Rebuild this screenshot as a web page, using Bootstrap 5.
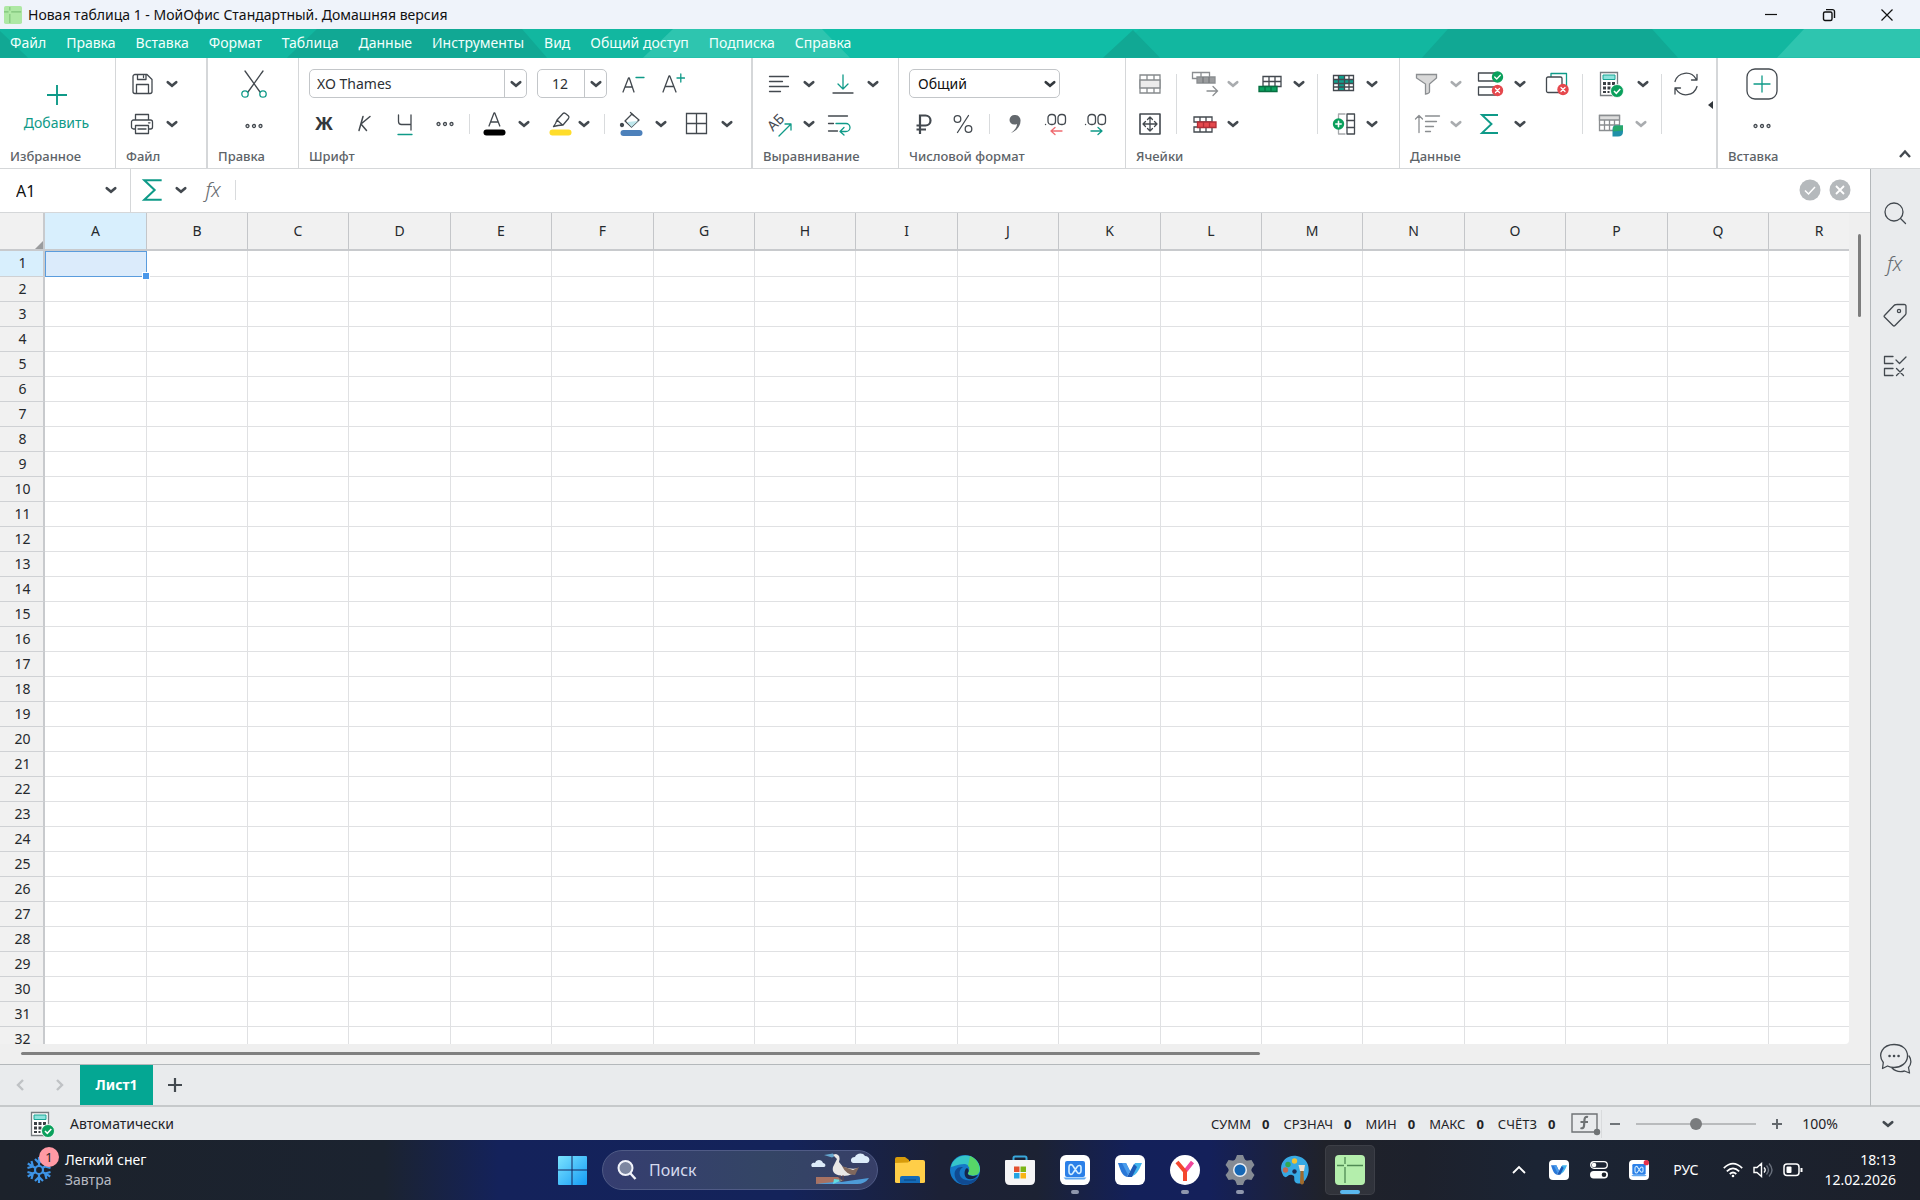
<!DOCTYPE html>
<html lang="ru">
<head>
<meta charset="utf-8">
<meta name="viewport" content="width=device-width, initial-scale=1">
<title>Новая таблица 1 - МойОфис Стандартный. Домашняя версия</title>
<link href="https://cdn.jsdelivr.net/npm/bootstrap@5.3.0/dist/css/bootstrap.min.css" rel="stylesheet">
<style>
:root{--ink:#43494f;--teal:#0f9a88;--line:#d5d7d9;--panel:#e9ebed}
body{font-family:"Noto Sans","Open Sans",sans-serif;font-size:14px;line-height:20px;color:#1f2327;height:100vh;background:#fff;overflow:hidden}
button{background:none;border:0;padding:0;color:var(--ink);font:inherit}
svg{display:block;flex:none}
.ln{fill:none;stroke:var(--ink);stroke-width:1.3;stroke-linecap:round;stroke-linejoin:round}
.tl{stroke:var(--teal)}
.off{opacity:.45}
.titlebar{height:29px;background:#eff3fa;font-size:14px;color:#111}
.titlebar .ctl{width:58px;height:29px;color:#111}
.menubar{height:29px;background:#12b7a0}
.menubar svg{position:absolute;inset:0;width:100%;height:100%}
.menubar nav{position:relative;gap:20px;padding-left:10px}
.menubar a{color:#f2fffc;text-decoration:none;font-size:14px;line-height:28px;white-space:nowrap}
.ribbon{height:112px;border-bottom:1px solid var(--line)}
.grp{border-right:1px solid var(--line);padding:6px 0 0 10px;position:relative}
.grp.last{border:0;flex:1}
.grp .body{height:82px}
.grp h2{font-size:13px;line-height:20px;font-weight:500;color:#5d6368;margin:0;white-space:nowrap}
.w-fav{width:116px}.w-file{width:92px}.w-edit{width:91px}.w-font{width:454px}.w-align{width:146px}.w-num{width:227px}.w-cells{width:274px}.w-data{width:318px}
.trow{height:40px;display:flex;align-items:center}
.tool{width:24px;height:28px;display:flex;align-items:center;justify-content:center;flex:none}
.tool.wide{width:28px}
.chev{width:16px;height:24px;display:flex;align-items:center;justify-content:center;flex:none}
.vr1{width:1px;height:20px;background:#d9dbdd;flex:none}
.vr1.tall{height:60px;margin-top:10px}
.m6{margin-left:6px}.m10{margin-left:10px}.m12{margin-left:12px}.m14{margin-left:14px}
.combo{height:29px;border:1px solid #c3c6c9;border-radius:5px;display:flex;align-items:center;background:#fff;overflow:hidden}
.combo input{border:0;outline:0;min-width:0;flex:1;height:27px;padding:0 7px;font-size:14px;color:#2b3034;background:none}
.combo button{width:22px;height:27px;border-left:1px solid #c3c6c9;display:flex;align-items:center;justify-content:center}
.fnt{width:218px}.siz{width:70px}
.siz input{padding:0 0 0 14px}
.numsel{position:relative;width:151px}
.numsel select{appearance:none;width:100%;height:29px;border:1px solid #c3c6c9;border-radius:5px;padding:0 8px;font-size:14px;color:#111;background:#fff}
.numsel svg{position:absolute;right:2px;top:7px;pointer-events:none}
.gl{font-size:20px;line-height:24px;color:#666b70;font-weight:300}
.fbar{height:44px;border-bottom:1px solid var(--line)}
.namebox{width:131px;border-right:1px solid var(--line);padding-left:16px}
.namebox input,.fxin{border:0;outline:0;font-size:16px;min-width:0;background:none}
.namebox input{width:87px;padding:2px 0 0;color:#111}
.sheet{flex:1 1 0;overflow:hidden;position:relative;border-radius:0 0 4px 0;background:#fff}
.cells{table-layout:fixed;border-collapse:separate;border-spacing:0;width:1px}
.cells th{font-weight:400;text-align:center;background:#f1f1f1;padding:0;color:#25292d;overflow:hidden}
.cells thead th{height:38px;border-right:1px solid #c4c6c9;border-bottom:2px solid #c8cacd;font-size:14px}
.cells tbody th{height:25px;border-bottom:1px solid #cfd1d4;border-right:2px solid #c8cacd;font-size:14px;line-height:24px;padding-left:2px}
.cells tbody tr:first-child th{height:26px}
.cells thead th:first-child{border-right:2px solid #c8cacd;position:relative}
.cells thead th:first-child::after{content:"";position:absolute;right:0;bottom:0;border:4px solid;border-color:transparent #9a9c9e #9a9c9e transparent}
.cells td{padding:0;border-right:1px solid #e0e1e3;border-bottom:1px solid #e0e1e3}
.cells .hot{background:#d8effd}
.cells td.sel{background:#dbebfb;border:1px solid #5a9cdd;position:relative}
.cells td.sel::after{content:"";position:absolute;right:-4px;bottom:-4px;width:8px;height:8px;background:#4a98ea;border:1px solid #fff;z-index:2}
.c-head{width:45px}.c-col{width:101px}.c-col.plus{width:102px}
.vscroll{width:21px;background:#efefef;padding:21px 0 0 9px}
.vscroll i{display:block;width:3px;height:83px;background:#7d7d7d;border-radius:2px}
.hscroll{height:21px;background:#efefef;border-bottom:1px solid #b4b8bb;padding:8px 0 0 21px}
.hscroll i{display:block;width:67%;height:3px;background:#808080;border-radius:2px}
.tabs{height:42px;background:var(--panel);border-bottom:2px solid #c6c9cb}
.tabs .arr{width:40px;color:#b9bcbf}
.tabs .cur{width:73px;height:40px;background:#04a793;color:#fff;font-weight:700;font-size:14px}
.side{width:51px;background:var(--panel);border-left:1px solid #b4b8bb;border-bottom:2px solid #c6c9cb;padding:27px 0 6px}
.side .sb{width:48px;height:34px;margin-bottom:17px;display:flex;align-items:center;justify-content:center}
.status{height:33px;background:var(--panel);font-size:14px}
.status .sums{font-size:13px;gap:14px}
.status .sums b{margin-left:11px}
.zoomr{appearance:none;width:120px;height:14px;background:linear-gradient(#b9bbbd,#b9bbbd) center/100% 2px no-repeat;margin:0}
.zoomr::-webkit-slider-thumb{appearance:none;width:12px;height:12px;border-radius:50%;background:#7a7c7e}
.zoomlist{margin:0 24px 0 42px}
.task{height:60px;color:#fff;font-size:14px;line-height:20px;background:linear-gradient(90deg,#1c222b 0,#1b2330 20%,#14225b 26%,#14235a 41%,#1c2136 49%,#1c2233 54%,#13205a 59%,#14205a 63%,#20222a 69%,#1d212c 74%,#1b2434 80%,#1c202a 100%)}
.task .edge{flex:1 1 0}
.task .pinned{padding-left:30px}
.task button{color:#fff}
.tk{width:55px;height:60px;position:relative;display:flex;align-items:center;justify-content:center}
.tk.run::after{content:"";position:absolute;bottom:6px;left:24px;width:8px;height:4px;border-radius:2px;background:#8f97ad}
.tk.act::before{content:"";position:absolute;left:3px;top:5px;width:50px;height:50px;border-radius:5px;background:#ffffff14;border:1px solid #ffffff10}
.tk.act::after{left:18px;width:20px;background:#5bb8ee}
.tk svg{position:relative}
.start{width:45px}
.find{width:276px;height:40px;border:1px solid #505b86;border-radius:20px;background:linear-gradient(90deg,#353d70,#344565 60%,#373f68);padding-left:14px;margin:0 4px 0 8px}
.find input{flex:1;min-width:0;border:0;outline:0;background:none;color:#dbe0f2;font-size:16px;padding:0 0 0 12px}
.find input::placeholder{color:#d5daee;opacity:1}
.tray{width:40px;height:60px;display:flex;align-items:center;justify-content:center}
.tray.slim{width:30px}
.flake{position:relative;margin-left:25px;width:40px}
.flake b{position:absolute;left:14px;top:-9px;width:20px;height:20px;border-radius:50%;background:#ff99a4;color:#222;font-weight:400;font-size:13px;text-align:center}
</style>
</head>
<body class="d-flex flex-column">
<svg width="0" height="0" class="position-absolute" aria-hidden="true">
<symbol id="chev" viewBox="0 0 16 16"><path d="M3.800 6.200 8 9.800l4.200-3.600" fill="none" stroke="currentColor" stroke-width="2.700" stroke-linecap="round"/></symbol>
<symbol id="dots" viewBox="0 0 20 8"><g fill="none" stroke="#43494f" stroke-width="1.300"><circle cx="3.500" cy="4" r="1.500"/><circle cx="10" cy="4" r="1.500"/><circle cx="16.500" cy="4" r="1.500"/></g></symbol>
<symbol id="sigma" viewBox="0 0 24 24"><path d="M20 3H4l9.500 9L4 21h16" fill="none" stroke="#0f9a88" stroke-width="1.900"/></symbol>
<symbol id="calc" viewBox="0 0 28 28"><path d="M3.500 2.500h17v23h-17z" fill="#fff" stroke="#777c80" stroke-width="1.300"/><path d="M6 5h12v4.500H6z" fill="#8fe3dd" stroke="#1aa594"/><g fill="#3a3f44"><path d="M6 12h3v3H6zM10.500 12h3v3h-3zM15 12h3v3h-3zM6 16.500h3v3H6zM10.500 16.500h3v3h-3zM6 21h3v2H6zM10.500 21h2v2h-2z"/></g><circle cx="20" cy="21" r="6.500" fill="#0aa05c" stroke="#fff" stroke-width=".8"/><path d="m17 21 2.300 2.300 4-4.300" fill="none" stroke="#fff" stroke-width="1.500"/></symbol>
<symbol id="wlogo" viewBox="0 0 30 30"><rect width="30" height="30" rx="6" fill="#fff"/><path d="M3 8h8l4 8-3 6c-5-1-7-8-9-14z" fill="#2a78d8"/><path d="M27 8h-7l-7 14c8 0 11-7 14-14z" fill="#42b4ee"/><path d="m12 22 7-13 3 3-5 10z" fill="#1c5bb8"/><path d="M7 8h4l4 8-2 4z" fill="#4a9cec"/></symbol>
<symbol id="lap" viewBox="0 0 30 30"><rect width="30" height="30" rx="6" fill="#fff"/><rect x="5" y="6" width="20" height="16" rx="2" fill="#2b80e8"/><path d="M3.500 22.500h23l-2 2h-19z" fill="#5fa9f2"/><path d="M9 17V12c0-3 3-3 4-1l4 6c1 2 4 2 4-1v-4c0-2-3-2-4 0l-4 6c-1 2-4 2-4-1" fill="none" stroke="#d5efff" stroke-width="1.600"/></symbol>
</svg>

<header class="titlebar d-flex align-items-center">
 <svg class="ms-1" style="margin-right:6px" width="18" height="20" viewBox="0 0 20 20"><rect width="20" height="20" rx="2" fill="#aee8a4"/><path d="M0 6.500h5M8 6.500h11M6.500 1v4M6.500 9v10" stroke="#7fc179" stroke-width="1.200"/></svg>
 <span>Новая таблица 1 - МойОфис Стандартный. Домашняя версия</span>
 <div class="ms-auto d-flex">
  <button class="ctl d-flex align-items-center justify-content-center" aria-label="Свернуть"><svg width="14" height="14"><path d="M1 6.500h12" stroke="#111" stroke-width="1.200"/></svg></button>
  <button class="ctl d-flex align-items-center justify-content-center" aria-label="Окно"><svg width="14" height="14" fill="none" stroke="#111" stroke-width="1.400"><rect x="1.500" y="4" width="8.500" height="8.500" rx="1.500"/><path d="M4 1.600h6.500a2 2 0 0 1 2 2V10"/></svg></button>
  <button class="ctl d-flex align-items-center justify-content-center me-1" aria-label="Закрыть"><svg width="14" height="14"><path d="m1.500 1.500 11 11m0-11-11 11" stroke="#111" stroke-width="1.200"/></svg></button>
 </div>
</header>

<div class="menubar position-relative">
 <svg viewBox="0 0 1920 29" preserveAspectRatio="none"><path d="M700 0h440l-36 29H700z" fill="#10bda6"/><g fill="#11a894"><path d="M0 2v27h28zM317 0h205l25 29H287zM1133 1l-30 28h57zM1448 0h204l26 29h-256z"/></g><g fill="#2ec5af"><path d="M673 0h149l28 29H643zM1804 0h116v29h-143z"/></g></svg>
 <nav class="d-flex"><a href="#">Файл</a><a href="#">Правка</a><a href="#">Вставка</a><a href="#">Формат</a><a href="#">Таблица</a><a href="#">Данные</a><a href="#">Инструменты</a><a href="#">Вид</a><a href="#">Общий доступ</a><a href="#">Подписка</a><a href="#">Справка</a></nav>
</div>

<div class="ribbon d-flex">
 <section class="grp w-fav"><div class="body d-flex flex-column align-items-center pe-2">
   <button class="d-flex flex-column align-items-center pe-1" style="color:#0f9a88;padding-top:21px"><svg width="20" height="20"><path d="M10 0v20M0 10h20" stroke="#0f9a88" stroke-width="1.900"/></svg><span class="pt-2">Добавить</span></button>
  </div><h2>Избранное</h2></section>
 <section class="grp w-file" style="border-right-width:2px"><div class="body ps-1">
   <div class="trow"><button class="tool" aria-label="Сохранить"><svg width="24" height="24" class="ln"><path d="M5 2.500h12l5 5v12a2 2 0 0 1-2 2H5a2 2 0 0 1-2-2v-15a2 2 0 0 1 2-2zM7.500 2.500v5H16v-5M13.500 4v1.500M6.500 21v-8.500h12V21"/></svg></button><button class="chev m10" aria-label="Ещё"><svg width="16" height="16"><use href="#chev"/></svg></button></div>
   <div class="trow"><button class="tool" aria-label="Печать"><svg width="24" height="24" class="ln"><path d="M5.500 8V2.500h13V8M5.500 17h-2a2 2 0 0 1-2-2v-5a2 2 0 0 1 2-2h17a2 2 0 0 1 2 2v5a2 2 0 0 1-2 2h-2M5.500 13.500h13v8h-13zM8 17h8M18.500 10.800h1.500"/></svg></button><button class="chev m10" aria-label="Ещё"><svg width="16" height="16"><use href="#chev"/></svg></button></div>
  </div><h2>Файл</h2></section>
 <section class="grp w-edit"><div class="body pe-2">
   <div class="trow justify-content-center"><button class="tool wide" aria-label="Вырезать"><svg width="28" height="30" class="ln"><path d="m5 2 15 21M23 2 8 23"/><g class="tl"><circle cx="5" cy="25" r="3.200"/><circle cx="23" cy="25" r="3.200"/></g></svg></button></div>
   <div class="trow justify-content-center pt-1"><button class="tool" aria-label="Ещё"><svg width="20" height="8"><use href="#dots"/></svg></button></div>
  </div><h2>Правка</h2></section>
 <section class="grp w-font" style="border-right-width:2px"><div class="body">
   <div class="trow"><div class="combo fnt"><input aria-label="Шрифт" value="XO Thames"><button aria-label="Список шрифтов"><svg width="16" height="16"><use href="#chev"/></svg></button></div>
    <div class="combo siz m10"><input aria-label="Размер" value="12"><button aria-label="Размеры"><svg width="16" height="16"><use href="#chev"/></svg></button></div>
    <button class="tool m14" aria-label="Меньше"><svg width="24" height="24" class="ln"><path d="M2 20 7.500 6h.8L13 20M4 15h7.500"/><path class="tl" d="M15 5.500h8"/></svg></button>
    <button class="tool ms-3" aria-label="Больше"><svg width="24" height="24" class="ln"><path d="M2 20 8 4h.8L15 20M4.200 14.500h8.500"/><path class="tl" d="M16 6h7.500M19.800 2v8"/></svg></button></div>
   <div class="trow"><button class="tool ms-1" aria-label="Полужирный"><svg width="24" height="24"><text x="11" y="18" text-anchor="middle" font-size="18" font-weight="700" fill="#33383d">Ж</text></svg></button>
    <button class="tool ms-3" aria-label="Курсив"><svg width="24" height="24" class="ln" style="stroke-width:1.500"><path d="m10 4.500-4 14M17 4.500l-9 7.500 5.500 6.500"/></svg></button>
    <button class="tool ms-3" aria-label="Подчёркнутый"><svg width="24" height="24" class="ln"><path d="M5.500 3v6.500q0 3 3 3h9.500M18 3v15"/><path d="M5 22.500h14" class="tl"/></svg></button>
    <button class="tool ms-3" aria-label="Ещё"><svg width="20" height="8"><use href="#dots"/></svg></button>
    <span class="vr1 m12"></span>
    <button class="tool m12" aria-label="Цвет текста"><svg width="24" height="26" class="ln"><path d="m7 15 5-13h.8l5 13M9 11h7"/><path d="M4.500 21.500h16" stroke-width="6" style="stroke:#000"/></svg></button><button class="chev m10" aria-label="Цвета"><svg width="16" height="16"><use href="#chev"/></svg></button>
    <button class="tool ms-3" aria-label="Выделение"><svg width="24" height="26" class="ln"><path d="m9 9 6-6.500q1-1 2.500 0l3 2.500q1 1 0 2.500L15 14l-5 .500-4.500 1 2-3zM9 9l5.500 5"/><path d="M4.500 21.500h16" stroke-width="6" style="stroke:#ffdd2b"/></svg></button><button class="chev ms-1" aria-label="Цвета"><svg width="16" height="16"><use href="#chev"/></svg></button>
    <span class="vr1 m12"></span>
    <button class="tool m14" aria-label="Заливка"><svg width="24" height="26" class="ln"><path d="m13 3 7 6-7.500 7L6 10z" fill="#fff"/><path d="m8 11 11-1-6.500 6z" fill="#bfe7ec" style="stroke:none"/><path d="m11.500 1.500 3 3"/><circle cx="3" cy="14" r="1.500" fill="#43494f"/><path d="M4.500 22h16" stroke-width="6" style="stroke:#4d81bb"/></svg></button><button class="chev m10" aria-label="Цвета"><svg width="16" height="16"><use href="#chev"/></svg></button>
    <button class="tool ms-3" aria-label="Границы"><svg width="24" height="24" class="ln" style="stroke-linejoin:miter"><path d="M1.500 1.500h20v20h-20zM11.500 1.500v20M1.500 11.500h20"/></svg></button><button class="chev m10" aria-label="Границы"><svg width="16" height="16"><use href="#chev"/></svg></button></div>
  </div><h2>Шрифт</h2></section>
 <section class="grp w-align"><div class="body ps-1">
   <div class="trow"><button class="tool" aria-label="По левому краю"><svg width="24" height="24" class="ln"><path d="M2.500 4.500h19M2.500 9.500h13M2.500 14.500h19M2.500 19.500h11"/></svg></button><button class="chev m10" aria-label="Ещё"><svg width="16" height="16"><use href="#chev"/></svg></button>
    <button class="tool m14" aria-label="По нижнему краю"><svg width="24" height="24" class="ln"><path class="tl" d="M12 3v14M7 12l5 5 5-5"/><path d="M2 21h20"/></svg></button><button class="chev m10" aria-label="Ещё"><svg width="16" height="16"><use href="#chev"/></svg></button></div>
   <div class="trow"><button class="tool" aria-label="Поворот"><svg width="30" height="28"><text transform="translate(9 22) rotate(-45)" font-size="14" fill="#43494f">АБ</text><path class="ln tl" d="M15 26 27 14M21 14h6v6"/></svg></button><button class="chev m10" aria-label="Ещё"><svg width="16" height="16"><use href="#chev"/></svg></button>
    <button class="tool m10" aria-label="Перенос"><svg width="24" height="24" class="ln"><path d="M1.500 4h19M1.500 11.500h5M1.500 19h9"/><path class="tl" d="M9 11.500h10a3.500 3.500 0 0 1 0 8h-5.500M17 15.500l-4 4 4 3.500"/></svg></button></div>
  </div><h2>Выравнивание</h2></section>
 <section class="grp w-num"><div class="body">
   <div class="trow"><div class="numsel"><select aria-label="Формат числа"><option>Общий</option></select><svg width="16" height="16" color="#33383d"><use href="#chev"/></svg></div></div>
   <div class="trow"><button class="tool ms-1" aria-label="Рубли"><svg width="24" height="24" fill="none" stroke="#43494f" stroke-width="2.200"><path d="M7 22V3.500h5.500a4.500 4.500 0 0 1 0 10H3.500M3.500 17.500H13"/></svg></button>
    <button class="tool m14" aria-label="Проценты"><svg width="24" height="24" class="ln"><circle cx="6.500" cy="7" r="3.300"/><circle cx="17.500" cy="17" r="3.300"/><path d="M17.500 3.500 6.500 20.500"/></svg></button>
    <span class="vr1 m14"></span>
    <button class="tool m14" aria-label="Разделитель"><svg width="24" height="24" fill="#63686d"><path d="M11 3a5.300 5.300 0 0 1 5.500 6c0 5-3.500 9.500-9.500 12 4-3 6-6 6-9-4 1.500-7.500-.5-7.500-4A5 5 0 0 1 11 3z"/></svg></button>
    <button class="tool ms-3" aria-label="Больше знаков"><svg width="24" height="24" class="ln"><rect x="4" y="2.500" width="7.500" height="10" rx="3.200"/><rect x="14" y="2.500" width="7.500" height="10" rx="3.200"/><path d="M1.500 12.500h.1"/><path d="M18 19H7M11 15.500 7 19l4 3.500" style="stroke:#ef6b70"/></svg></button>
    <button class="tool ms-3" aria-label="Меньше знаков"><svg width="24" height="24" class="ln"><rect x="4" y="2.500" width="7.500" height="10" rx="3.200"/><rect x="14" y="2.500" width="7.500" height="10" rx="3.200"/><path d="M1.500 12.500h.1"/><path d="M7 19h11M14 15.500l4 3.500-4 3.500" class="tl"/></svg></button></div>
  </div><h2>Числовой формат</h2></section>
 <section class="grp w-cells"><div class="body d-flex">
   <div><div class="trow"><button class="tool wide" aria-label="Объединить"><svg width="24" height="24" fill="none" stroke="#868a8d" stroke-width="1.300"><path d="M2 3h20v18H2z"/><path d="M2 8h20v8H2z" fill="#ececec"/><path d="M9 3v5M16 3v5M9 16v5M16 16v5"/></svg></button></div>
    <div class="trow"><button class="tool wide" aria-label="Автоподбор"><svg width="24" height="24" class="ln"><path d="M2 2h20v20H2z" stroke-width="1.600"/><path d="M12 5v14M5 12h14M9.500 7.500 12 5l2.500 2.500M9.500 16.500 12 19l2.500-2.500M7.500 9.500 5 12l2.500 2.500M16.500 9.500 19 12l-2.500 2.500"/></svg></button></div></div>
   <span class="vr1 tall m12"></span>
   <div><div class="trow m14"><button class="tool wide" aria-label="Сдвиг"><svg width="28" height="28" fill="none" stroke="#8b8e91" stroke-width="1.300"><path d="M1.500 2.500h17v6h-17zM10 2.500v6"/><path d="M6 7h18v6H6z" fill="#9a9c9e"/><path d="M12 7v6M18 7v6" stroke="#777a7d"/><path d="M16 21h10M22 16.500l4.500 4.500-4.500 4.500" stroke-linecap="round"/></svg></button><button class="chev m6 off" aria-label="Ещё"><svg width="16" height="16"><use href="#chev"/></svg></button>
     <button class="tool wide ms-3" aria-label="Вставить строки"><svg width="28" height="24" fill="none" stroke="#43494f" stroke-width="1.300"><path d="M6 4.500h18v10H6zM6 9.500h18M12 4.500v10M18 4.500v10"/><path d="M2 14.500h18v5H2zM8 14.500v5M14 14.500v5" fill="#0ca15f" stroke="#066e40"/></svg></button><button class="chev m6" aria-label="Ещё"><svg width="16" height="16"><use href="#chev"/></svg></button></div>
    <div class="trow m14"><button class="tool wide" aria-label="Удалить строки"><svg width="28" height="24" fill="none" stroke="#43494f" stroke-width="1.300"><path d="M3 5h18v5H3zM3 15h18v5H3zM9 5v5M15 5v5M9 15v5M15 15v5"/><path d="M6.500 10H25v5.500H6.500zM12.500 10v5.500M18.500 10v5.500" fill="#e5484d" stroke="#b02e37"/></svg></button><button class="chev m6" aria-label="Ещё"><svg width="16" height="16"><use href="#chev"/></svg></button></div></div>
   <span class="vr1 tall m10"></span>
   <div><div class="trow m12"><button class="tool wide" aria-label="Закрепить"><svg width="28" height="24" fill="none" stroke="#43494f" stroke-width="1.300"><path d="M3.500 3.500h20v15h-20z"/><path d="M4 7.500h19v4H4zM8.500 4h6v14h-6z" fill="#0f9f8b" stroke="none"/><path d="M3.500 7.500h20M3.500 11.500h20M3.500 15h20M8.500 3.500v15M14.500 3.500v15M19 3.500v15"/></svg></button><button class="chev m6" aria-label="Ещё"><svg width="16" height="16"><use href="#chev"/></svg></button></div>
    <div class="trow m12"><button class="tool wide" aria-label="Группировать"><svg width="28" height="24" class="ln"><path d="M15 2H8.500v20H15" style="stroke:#a5a8ab"/><rect x="17" y="2" width="7.500" height="20"/><path d="M17 8.500h7.500M17 15.500h7.500"/><circle cx="8.500" cy="12" r="5.700" fill="#0aa05c" style="stroke:none"/><path d="M5.800 12h5.400M8.500 9.300v5.400" style="stroke:#fff;stroke-width:1.600"/></svg></button><button class="chev m6" aria-label="Ещё"><svg width="16" height="16"><use href="#chev"/></svg></button></div></div>
  </div><h2>Ячейки</h2></section>
 <section class="grp w-data" style="border-right-width:2px"><div class="body d-flex">
   <div><div class="trow ms-1"><button class="tool wide" aria-label="Фильтр"><svg width="28" height="24" fill="#d9d9d9" stroke="#8b8e91" stroke-width="1.300"><path d="M2.500 2.500h20v3.500l-7 6v7.500q0 2-4 2.500V12l-9-6z"/></svg></button><button class="chev m6 off" aria-label="Ещё"><svg width="16" height="16"><use href="#chev"/></svg></button>
     <button class="tool wide m12" aria-label="Проверка"><svg width="28" height="28" class="ln"><rect x="2.500" y="3" width="18" height="8"/><rect x="2.500" y="17" width="18" height="8"/><circle cx="21.500" cy="7" r="5.700" fill="#0aa05c" style="stroke:none"/><circle cx="21.500" cy="20.500" r="5.700" fill="#e5484d" style="stroke:none"/><path d="m18.700 7 2 2 3.600-3.800M19.500 18.500l4 4m0-4-4 4" style="stroke:#fff"/></svg></button><button class="chev ms-2" aria-label="Ещё"><svg width="16" height="16"><use href="#chev"/></svg></button>
     <button class="tool wide ms-3" aria-label="Дубликаты"><svg width="28" height="26" class="ln"><path class="tl" d="M7 5.500V2.500h15.500V18"/><rect x="2.500" y="6" width="15.500" height="15.500" rx="1.500"/><circle cx="19" cy="18.500" r="5.700" fill="#e5484d" style="stroke:none"/><path d="m17 16.500 4 4m0-4-4 4" style="stroke:#fff"/></svg></button></div>
    <div class="trow ms-1"><button class="tool wide" aria-label="Сортировка"><svg width="28" height="24" class="ln" style="stroke:#8b8e91"><path d="M5 20.500v-17M1.500 7 5 3.500 8.500 7M11.500 4h14M11.500 9.500h11M11.500 14.500h8M11.500 19.500h5"/></svg></button><button class="chev m6 off" aria-label="Ещё"><svg width="16" height="16"><use href="#chev"/></svg></button>
     <button class="tool wide m12" aria-label="Сумма"><svg width="24" height="24"><use href="#sigma"/></svg></button><button class="chev ms-2" aria-label="Ещё"><svg width="16" height="16"><use href="#chev"/></svg></button></div></div>
   <span class="vr1 tall m10"></span>
   <div><div class="trow m14"><button class="tool wide" aria-label="Пересчёт"><svg width="28" height="28"><use href="#calc"/></svg></button><button class="chev m10" aria-label="Ещё"><svg width="16" height="16"><use href="#chev"/></svg></button></div>
    <div class="trow m14"><button class="tool wide" aria-label="Сводная таблица"><svg width="28" height="26" fill="none" stroke="#8b8e91" stroke-width="1.300"><path d="M2.500 4.500h20v15h-20z"/><path d="M2.500 4.500h20V9h-20z" fill="#ddd"/><path d="M2.500 14h20M7.500 9v10.500M12.500 9v10.500M17.500 9v10.500"/><path d="M18.500 14.500H26v6q0 5-5 5h-5.500v-7q0-4 3-4z" fill="#2090a8" stroke="none"/><path d="M18.500 14.500H26v5l-10 1q-.5-6 2.500-6z" fill="#27a86b" stroke="none"/></svg></button><button class="chev ms-2 off" aria-label="Ещё"><svg width="16" height="16"><use href="#chev"/></svg></button></div></div>
   <span class="vr1 tall m10"></span>
   <div class="trow m10"><button class="tool wide" aria-label="Обновить"><svg width="28" height="28" class="ln"><path d="M3 11.500A11.500 11.500 0 0 1 24 9M25 4.500V10h-5.500M25 16.500A11.500 11.500 0 0 1 4 19M3 24v-6h5.500"/></svg></button></div>
   <svg class="ms-2 align-self-center" width="6" height="8"><path d="M5 0v8L0 4z" fill="#33383d"/></svg>
  </div><h2>Данные</h2></section>
 <section class="grp last"><div class="body ps-3">
   <div class="trow m6" style="margin-left:2px"><button aria-label="Вставить"><svg width="32" height="32" class="ln"><rect x="1" y="1" width="30" height="30" rx="8"/><path class="tl" d="M16 8v16M8 16h16"/></svg></button></div>
   <div class="trow m6 pt-1"><button class="tool" aria-label="Ещё"><svg width="20" height="8"><use href="#dots"/></svg></button></div>
  </div><div class="d-flex justify-content-between"><h2>Вставка</h2><button class="me-2" aria-label="Свернуть ленту"><svg width="14" height="16"><path d="m2 9 5-5.500L12 9" fill="none" stroke="#43494f" stroke-width="2.400"/></svg></button></div></section>
</div>

<div class="d-flex flex-grow-1" style="min-height:0">
 <main class="d-flex flex-column flex-grow-1" style="min-width:0">
  <div class="fbar d-flex align-items-stretch">
   <div class="namebox d-flex align-items-center"><input aria-label="Имя ячейки" value="A1"><button class="chev" aria-label="Имена"><svg width="16" height="16"><use href="#chev"/></svg></button></div>
   <div class="d-flex align-items-center flex-grow-1">
    <button class="tool m10" aria-label="Сумма"><svg width="26" height="26" viewBox="0 0 24 24"><use href="#sigma"/></svg></button><button class="chev ms-2" aria-label="Функции"><svg width="16" height="16"><use href="#chev"/></svg></button>
    <button class="tool m12 gl fst-italic" aria-label="Формула">fx</button><span class="vr1 m10"></span>
    <input class="fxin flex-grow-1 ms-2" aria-label="Строка формул">
    <button class="tool" aria-label="Принять"><svg width="22" height="22"><circle cx="11" cy="11" r="10.500" fill="#b5b9bc"/><path d="m6 11.500 3.500 3.500 6.500-7" fill="none" stroke="#fff" stroke-width="1.500"/></svg></button>
    <button class="tool m6" style="margin-right:18px" aria-label="Отменить"><svg width="22" height="22"><circle cx="11" cy="11" r="10.500" fill="#b5b9bc"/><path d="m7 7 8 8m0-8-8 8" fill="none" stroke="#fff" stroke-width="1.800"/></svg></button>
   </div>
  </div>
  <div class="d-flex flex-grow-1" style="min-height:0;background:#efefef">
   <div class="sheet"><table class="cells"><colgroup id="cg"><col class="c-head"></colgroup><thead><tr id="hd"><th></th></tr></thead><tbody id="bd"></tbody></table></div>
   <div class="vscroll"><i></i></div>
  </div>
  <div class="hscroll"><i></i></div>
  <div class="tabs d-flex align-items-start">
   <button class="arr h-100 d-flex align-items-center justify-content-center" aria-label="Назад"><svg width="10" height="14"><path d="M8 2 3 7l5 5" fill="none" stroke="#bfc2c5" stroke-width="2.400"/></svg></button>
   <button class="arr h-100 d-flex align-items-center justify-content-center" aria-label="Вперёд"><svg width="10" height="14"><path d="m2 2 5 5-5 5" fill="none" stroke="#bfc2c5" stroke-width="2.400"/></svg></button>
   <button class="cur">Лист1</button>
   <button class="h-100 m14" aria-label="Добавить лист"><svg width="16" height="16"><path d="M8 1v14M1 8h14" stroke="#43494f" stroke-width="2.200"/></svg></button>
  </div>
 </main>
 <aside class="side d-flex flex-column">
  <button class="sb" aria-label="Поиск"><svg width="24" height="24" class="ln"><circle cx="11" cy="11" r="9"/><path d="m17.500 17.500 5 5"/></svg></button>
  <button class="sb gl fst-italic" aria-label="Функции">fx</button>
  <button class="sb" aria-label="Имена"><svg width="26" height="26" class="ln"><path d="M2.500 13.500 12 3.500q1-1 2.500-1l7.500-.2q2 0 2 2v7q0 1-1 2L13 23.500q-1 1-2 0l-8.500-8.500q-.8-.8 0-1.500z"/><circle cx="17" cy="9" r="1.600"/></svg></button>
  <button class="sb" aria-label="Правила"><svg width="26" height="24" class="ln"><path d="M11 2.500H2.500v7H11M11 14.500H2.500v7H11M14 6l3.500 3.500L24 3M14.500 14.500l7 7m0-7-7 7"/></svg></button>
  <button class="sb mt-auto mb-4" aria-label="Обсуждение"><svg width="34" height="32" class="ln"><path d="M16 2.500c8 0 13.500 4.500 13.500 11.500S23 25.500 16 25.500c-3 0-4.500-.5-6.500-1.500l-5 2.500.8-6C-1 12 5 2.500 16 2.500zM31 14c3 4 2 9-.5 11.500l1 5.500-5-2c-4 1-9 .5-12.500-3"/><path d="M11.500 14h.1M16 14h.1M20.500 14h.1" stroke-width="2.500"/></svg></button>
 </aside>
</div>

<div class="status d-flex align-items-center">
 <button class="ms-4" style="padding-left:4px" aria-label="Режим пересчёта"><svg width="28" height="28"><use href="#calc"/></svg></button><span class="m14">Автоматически</span>
 <div class="sums d-flex ms-auto"><span>СУММ<b>0</b></span><span>СРЗНАЧ<b>0</b></span><span>МИН<b>0</b></span><span>МАКС<b>0</b></span><span>СЧЁТЗ<b>0</b></span></div>
 <button class="ms-3" aria-label="Функция"><svg width="30" height="24"><path d="M1 2h25v18H1z" fill="none" stroke="#6f7375" stroke-width="1.400"/><path d="M17 5q-3-1-3.500 2.500L13 14q-.5 3-3.500 2M9.500 10h7.500" fill="none" stroke="#6f7375" stroke-width="2.200"/><circle cx="26" cy="20" r="3.200" fill="#6f7375"/></svg></button>
 <span class="vr1" style="height:28px"></span>
 <button class="ms-2" aria-label="Уменьшить"><svg width="10" height="10"><path d="M0 5h10" stroke="#63686d" stroke-width="1.800"/></svg></button>
 <input type="range" class="zoomr ms-3" aria-label="Масштаб" min="0" max="200" value="100">
 <button class="ms-3" aria-label="Увеличить"><svg width="10" height="10"><path d="M0 5h10M5 0v10" stroke="#63686d" stroke-width="2"/></svg></button>
 <span style="margin-left:20px">100%</span>
 <button class="chev zoomlist" aria-label="Масштабы"><svg width="16" height="16"><use href="#chev"/></svg></button>
</div>

<footer class="task d-flex align-items-center">
 <div class="edge d-flex align-items-center">
  <div class="flake"><svg width="28" height="28" viewBox="-14 -14 28 28" fill="none" stroke="#3d94e6" stroke-width="2.200"><g id="arm"><path d="M0-4v-9M-4-11l4 4 4-4"/></g><use href="#arm" transform="rotate(60)"/><use href="#arm" transform="rotate(120)"/><use href="#arm" transform="rotate(180)"/><use href="#arm" transform="rotate(240)"/><use href="#arm" transform="rotate(300)"/><circle r="4"/></svg><b>1</b></div>
  <div><div>Легкий снег</div><div style="color:#b6bac2">Завтра</div></div>
 </div>
 <div class="pinned d-flex align-items-center">
  <button class="tk start" aria-label="Пуск"><svg width="30" height="30"><defs><linearGradient id="wg" gradientUnits="userSpaceOnUse" x1="0" y1="0" x2="30" y2="30"><stop stop-color="#7fe6ff"/><stop offset="1" stop-color="#149bf5"/></linearGradient></defs><path d="M1 2q0-1 1-1h12.500v13.500H1zM15.500 1H29q1 0 1 1v12.500H15.500zM1 15.500h13.500V30H2q-1 0-1-1zM15.500 15.500H30V29q0 1-1 1H15.500z" fill="url(#wg)"/></svg></button>
  <label class="find d-flex align-items-center"><svg width="20" height="20"><circle cx="8.500" cy="8" r="7" fill="#7c86a0" stroke="#f1f3fa" stroke-width="2"/><path d="m13.500 13.500 5 5.500" stroke="#f1f3fa" stroke-width="2.400"/></svg><input type="text" placeholder="Поиск" aria-label="Поиск">
   <svg width="68" height="36"><path d="M3 15c-2-3 1-5 3-4 1-4 7-4 8 0 3 0 3 4 1 4zM44 11c-3-1-3-6 2-6 1-4 8-5 10-1 5 0 6 6 2 7z" fill="#dcebf9"/><path d="M8 27h20l4 3 28-4q-4 6-12 6H10q-5-1-2-5z" fill="#4e9bd8"/><path d="M7 25h22l5 4-27 3z" fill="#a77263"/><path d="M24 32l9-4-8-1z" fill="#62dce2"/><path d="m22 3 5-1q5 1 3 8l4 5q10 3 15 1-4 8-15 8-12-1-10-9l4-8-3-3z" fill="#e9e7e6"/><path d="m15 3 9-1.500 1 3-2 1z" fill="#65a7cf"/><path d="m33 14 11 4 6-3-4 8q-9 0-13-9z" fill="#80685d"/><path d="M34 23v6M31 23v6" stroke="#68484d"/></svg></label>
  <button class="tk" aria-label="Проводник"><svg width="30" height="28"><path d="M0 3q0-2 2-2h8l4 3v8H0z" fill="#d79b0b"/><path d="M0 7l13-.5L16 4h12q2 0 2 2v20q0 1-2 1H2q-2 0-2-1z" fill="#ffce48"/><path d="M5 27v-5q0-2 2-2h16q2 0 2 2v5z" fill="#146bb8"/><path d="M9 24h12" stroke="#0d4f91" stroke-width="1.500"/></svg></button>
  <button class="tk" aria-label="Edge"><svg width="30" height="30"><circle cx="15" cy="15" r="15" fill="#1579c8"/><path d="M1 12C3 1 17-3 25 4c6 5 7 14 1 16-4 1-8 0-8-2 3-4 1-9-4-9C8 9 3 12 1 12z" fill="#36c6c9"/><path d="M20 1c9 3 13 17 6 19-4 1-8 0-8-2 2-3 2-6 0-7z" fill="#57d668"/><path d="M13 12c-5 3-5 11 3 13 5 1 8 0 12-3-4 8-14 10-20 5-6-6-4-16 5-15z" fill="#104a91"/><path d="M18 18c-1 2 2 3 6 3l4-1c-3 5-11 6-13 1-1-4 0-7 2-8 2 1 2 3 1 5z" fill="#16264b"/></svg></button>
  <button class="tk" aria-label="Магазин"><svg width="30" height="30"><path d="M8.500 6V3q0-1.500 1.500-1.500h10q1.500 0 1.500 1.500v3" fill="none" stroke="#39a8dc" stroke-width="2"/><path d="M0 6q0-1 1-1h28q1 0 1 1v19q0 5-5 5H5q-5 0-5-5z" fill="#f5f5f6"/><path d="M9 11.500h5.500V17H9z" fill="#e2502e"/><path d="M15.500 11.500H21V17h-5.500z" fill="#7cb518"/><path d="M9 18h5.500v5.500H9z" fill="#23a3e2"/><path d="M15.500 18H21v5.500h-5.500z" fill="#f8b517"/></svg></button>
  <button class="tk run" aria-label="Ноутбук"><svg width="30" height="30"><use href="#lap"/></svg></button>
  <button class="tk" aria-label="Приложение"><svg width="30" height="30"><use href="#wlogo"/></svg></button>
  <button class="tk run" aria-label="Браузер"><svg width="30" height="30"><circle cx="15" cy="15" r="15" fill="#fff"/><path d="M15 26v-9.500L22.500 7" fill="none" stroke="#f0479c" stroke-width="4"/><path d="M7 7l8 9.500V26" fill="none" stroke="#f4472e" stroke-width="4"/></svg></button>
  <button class="tk run" aria-label="Параметры"><svg width="32" height="32" viewBox="-16 -16 32 32"><g fill="#858b94"><circle r="11.500"/><g id="tooth"><path d="m-5-10 2-5h6l2 5zM-5 10l2 5h6l2-5z"/></g><use href="#tooth" transform="rotate(60)"/><use href="#tooth" transform="rotate(120)"/></g><circle r="7" fill="#e9edf2"/><circle r="5.500" fill="#1567b5"/></svg></button>
  <button class="tk" aria-label="Рисование"><svg width="30" height="30"><path d="M2 18C-2 8 7-1 17 1c11 2 14 12 10 21-3 7-9 8-12 5-2-3 1-6-3-7s-5 3-7 2-2-2-3-4z" fill="#37a9e4"/><circle cx="14.500" cy="6" r="2.700" fill="#f1c232"/><circle cx="8" cy="9.500" r="2.700" fill="#32a852"/><circle cx="5.500" cy="15" r="2.700" fill="#c26a52"/><circle cx="14.500" cy="16.500" r="2.200" fill="#1a2b52"/><path d="M20.500 16h3l.5 12q-2 3-4 0z" fill="#a06a2c"/><path d="M18.500 10h6.500l-1 6h-4z" fill="#eee0cf"/></svg></button>
  <button class="tk run act" aria-label="Таблица"><svg width="30" height="30"><rect width="30" height="30" rx="4" fill="#b4eeac"/><path d="M2 10.500h7M12 10.500h16M10 2v7M10 12v16" stroke="#4f8a54" stroke-width="1.300"/></svg></button>
 </div>
 <div class="edge d-flex align-items-center justify-content-end pe-4">
  <button class="tray" aria-label="Скрытые значки"><svg width="16" height="10"><path d="m2 8 6-6 6 6" fill="none" stroke="#fff" stroke-width="1.800"/></svg></button>
  <button class="tray" aria-label="Приложение"><svg width="20" height="20"><use href="#wlogo"/></svg></button>
  <button class="tray" aria-label="Переключатели"><svg width="18" height="18"><rect x=".7" y=".7" width="16.600" height="6.600" rx="3.300" fill="none" stroke="#fff" stroke-width="1.300"/><circle cx="4" cy="4" r="2.300" fill="#fff"/><rect y="10" width="18" height="7.500" rx="3.700" fill="#fff"/><circle cx="14" cy="13.700" r="2.300" fill="#1c222b"/></svg></button>
  <button class="tray" aria-label="Ноутбук"><svg width="20" height="20" viewBox="0 0 30 30"><use href="#lap"/><circle cx="26" cy="4" r="4" fill="#e4304a"/></svg></button>
  <button class="m14" style="margin-right:20px">РУС</button>
  <button class="tray slim" aria-label="Wi-Fi"><svg width="20" height="16" fill="none" stroke="#fff" stroke-width="1.700"><path d="M.8 6.200q9.200-9 18.400 0M3.800 9.300q6.200-6 12.400 0M6.700 12q3.300-3 6.600 0"/><circle cx="10" cy="14" r="1.300" fill="#fff" stroke="none"/></svg></button>
  <button class="tray slim" aria-label="Звук"><svg width="20" height="16" fill="none" stroke="#fff" stroke-width="1.400"><path d="M1 5.500h3L8.500 1.500v13L4 10.500H1zM11 5.500q2.500 2.500 0 5"/><path d="M13.500 3.500q4 4.500 0 9M16 1.500q6 6.500 0 13" stroke="#69707c"/></svg></button>
  <button class="tray slim" aria-label="Батарея"><svg width="20" height="14" fill="none" stroke="#fff" stroke-width="1.500"><rect x="1" y="1" width="15" height="11.500" rx="3"/><path d="M18.500 5v4" stroke-width="2"/><rect x="3.500" y="3.500" width="5" height="6.500" rx="1" fill="#fff" stroke="none"/></svg></button>
  <div class="text-end ms-3"><div>18:13</div><div>12.02.2026</div></div>
 </div>
</footer>

<script src="https://cdn.jsdelivr.net/npm/bootstrap@5.3.0/dist/js/bootstrap.bundle.min.js"></script>
<script>
const letters = [...'ABCDEFGHIJKLMNOPQR'];
// Column widths alternate between 101 and 102 px in a five-column rhythm.
cg.innerHTML += letters.map((l, i) => `<col class="c-col${i % 5 === 0 || i % 5 === 3 ? ' plus' : ''}">`).join('');
hd.innerHTML += letters.map((l, i) => `<th scope="col"${i ? '' : ' class="hot"'}>${l}</th>`).join('');
bd.innerHTML = Array.from({length: 32}, (_, r) =>
  `<tr><th scope="row"${r ? '' : ' class="hot"'}>${r + 1}</th>` +
  letters.map((l, c) => r || c ? '<td></td>' : '<td class="sel"></td>').join('') + '</tr>').join('');
</script>
</body>
</html>
